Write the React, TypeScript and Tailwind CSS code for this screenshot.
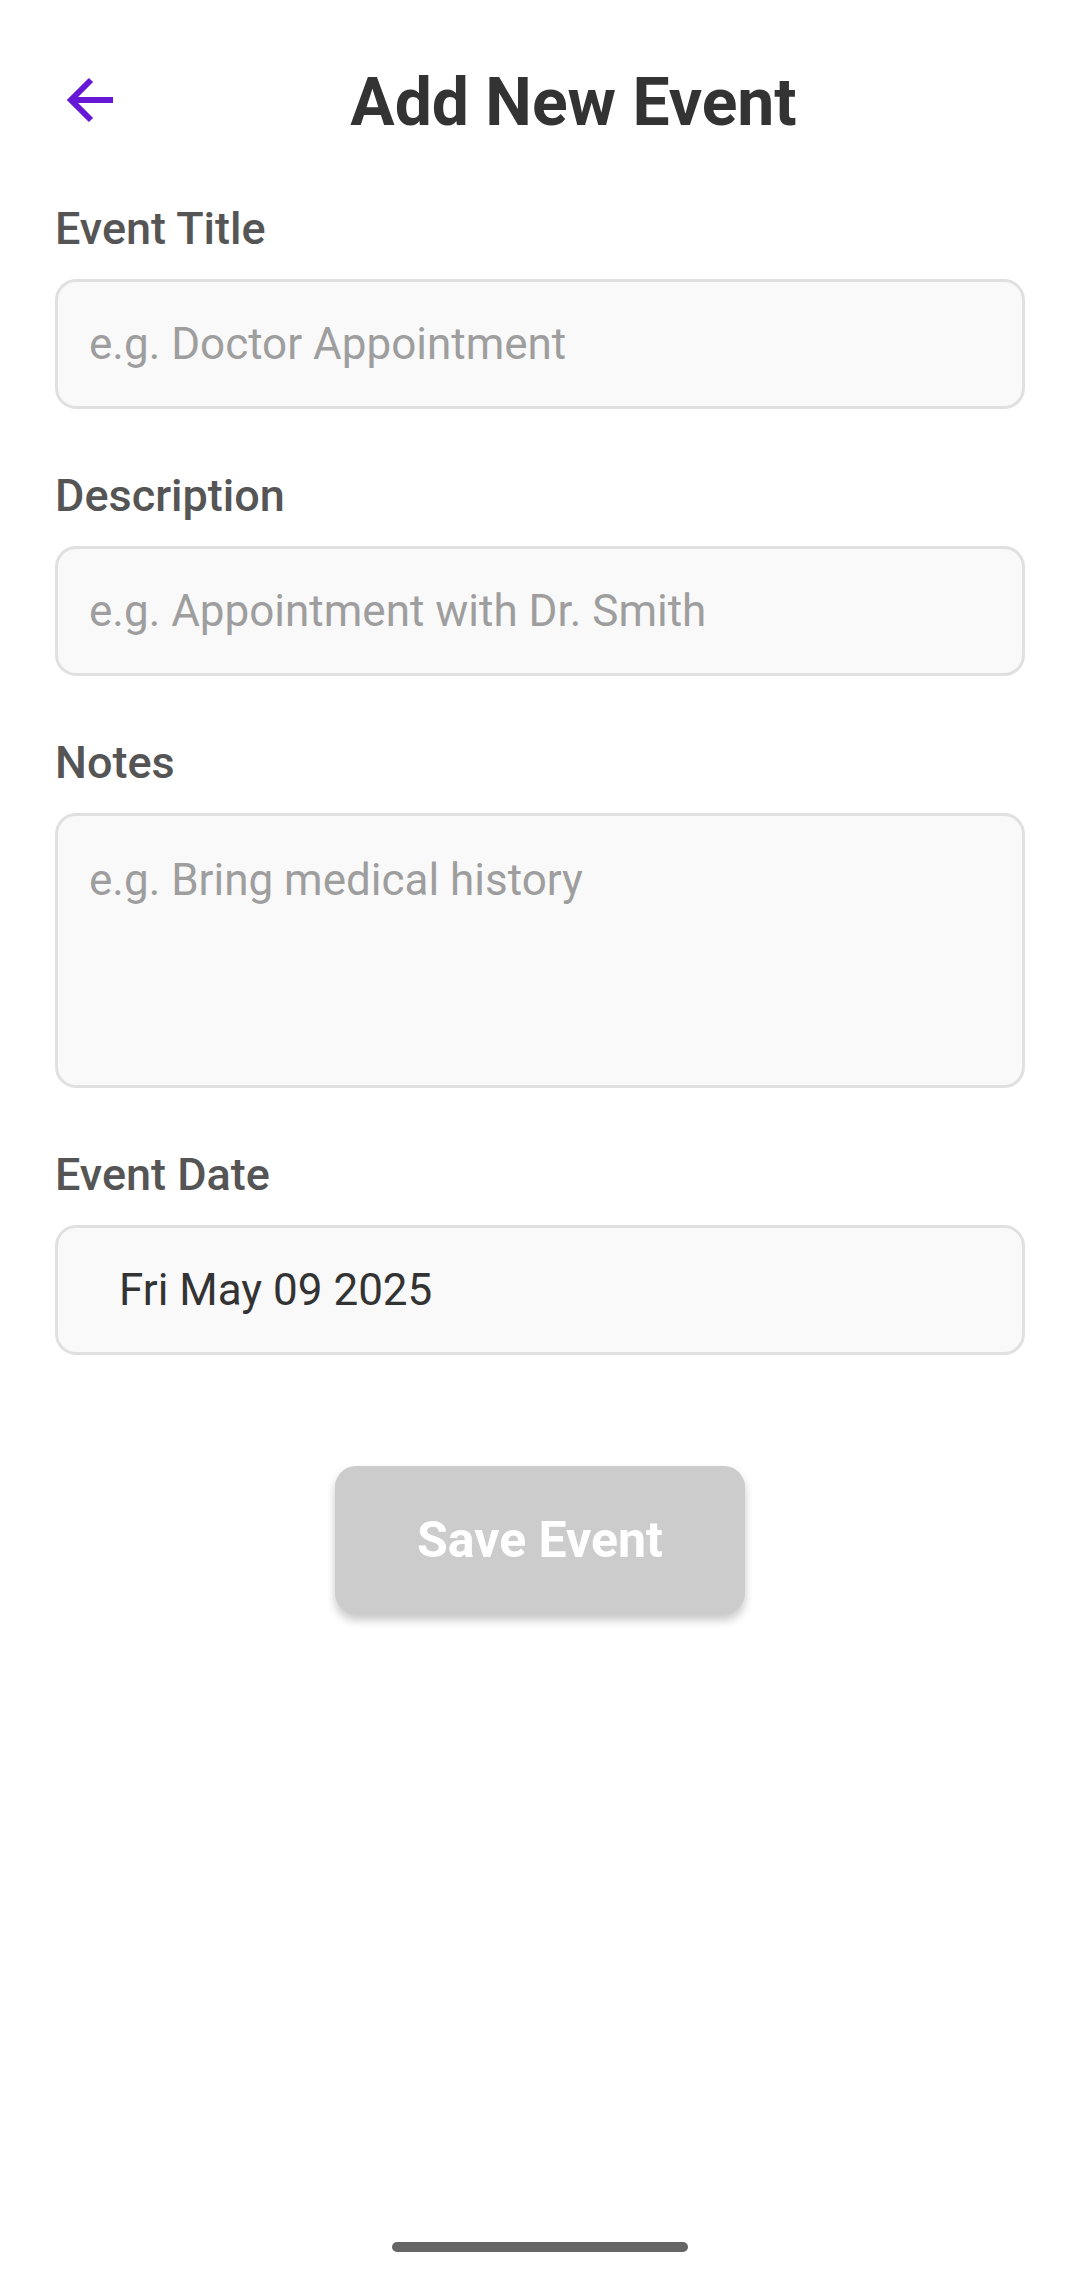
import React, { useState } from 'react';

const font = { fontFamily: 'Roboto, "Noto Sans", sans-serif' };

function Field({
  label,
  placeholder,
  value,
  multiline,
}: {
  label: string;
  placeholder?: string;
  value?: string;
  multiline?: boolean;
}) {
  return (
    <div className="flex flex-col">
      <label className="text-[45px] leading-[52px] font-medium text-[#555555] mb-[24px]">{label}</label>
      {multiline ? (
        <textarea
          placeholder={placeholder}
          className="h-[275px] w-full resize-none rounded-[21px] border-[3px] border-[#e0e0e0] bg-[#f9f9f9] px-[31px] pt-[38px] text-[44px] leading-[52px] text-[#333333] placeholder:text-[#9e9e9e] outline-none"
        />
      ) : (
        <input
          placeholder={placeholder}
          defaultValue={value}
          className={`h-[130px] w-full rounded-[21px] border-[3px] border-[#e0e0e0] bg-[#f9f9f9] text-[44px] text-[#333333] placeholder:text-[#9e9e9e] outline-none ${
            value ? 'pl-[61px]' : 'pl-[31px]'
          }`}
        />
      )}
    </div>
  );
}

export default function App() {
  const [saving] = useState(false);

  return (
    <div className="relative w-[1080px] h-[2280px] bg-white overflow-hidden" style={font}>
      <div className="px-[55px] pt-[63px]">
        {/* Header */}
        <div className="flex items-center h-[80px] mb-[60px]">
          <button className="w-[67px] h-[80px] flex items-center">
            <svg width="60" height="60" viewBox="0 0 60 60">
              <path
                d="M58 27H18M36 7L16 27L36 47"
                fill="none"
                stroke="#6518d6"
                strokeWidth={6}
              />
            </svg>
          </button>
          <h1 className="flex-1 text-center text-[66px] font-bold text-[#333333] leading-[80px]">
            Add New Event
          </h1>
        </div>

        {/* Form */}
        <div className="flex flex-col gap-[61px]">
          <Field label="Event Title" placeholder="e.g. Doctor Appointment" />
          <Field label="Description" placeholder="e.g. Appointment with Dr. Smith" />
          <Field label="Notes" placeholder="e.g. Bring medical history" multiline />
          <Field label="Event Date" value="Fri May 09 2025" />
        </div>

        <div className="flex justify-center mt-[111px]">
          <button
            disabled={!saving}
            className="w-[410px] h-[148px] rounded-[21px] bg-[#cccccc] text-white text-[50px] font-bold shadow-[0_6px_10px_rgba(0,0,0,0.22)]"
          >
            Save Event
          </button>
        </div>
      </div>

      {/* Gesture bar */}
      <div className="absolute left-[392px] top-[2242px] w-[296px] h-[10px] rounded-full bg-[#666666]" />
    </div>
  );
}
